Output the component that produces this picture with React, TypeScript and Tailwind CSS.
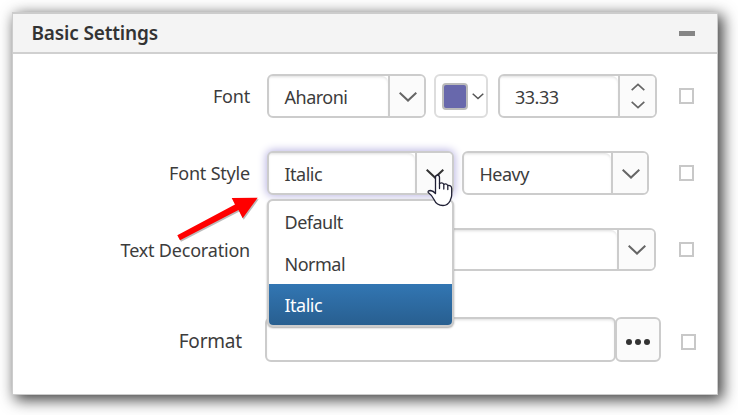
import React from 'react';

function Chevron({ w = 18, h = 10, up = false, color = '#666', sw = 2 }: { w?: number; h?: number; up?: boolean; color?: string; sw?: number }) {
  return (
    <svg width={w} height={h} viewBox={`0 0 ${w} ${h}`} fill="none" stroke={color} strokeWidth={sw} className="shrink-0">
      <path d={up ? `M.7 ${h - 0.8}L${w / 2} 1.4L${w - 0.7} ${h - 0.8}` : `M.7 .8L${w / 2} ${h - 1.4}L${w - 0.7} .8`} />
    </svg>
  );
}

function Label({ children, className }: { children: React.ReactNode; className: string }) {
  return <div className={`shrink-0 whitespace-nowrap text-right tracking-[-0.2px] ${className}`}>{children}</div>;
}

function Check({ className }: { className: string }) {
  return <span className={`shrink-0 border-2 border-[#c8c8c8] bg-white ${className}`} />;
}

function Combo({ text, className, side, glow = false, dark = false }: { text: string; className: string; side: string; glow?: boolean; dark?: boolean }) {
  return (
    <div className={`flex shrink-0 overflow-hidden rounded-md border-2 border-[#ccc] bg-white ${glow ? 'shadow-[0_0_8px_1px_#b9b4e2]' : ''} ${className}`}>
      <div className="flex flex-1 items-center rounded-tr-md pl-[15.5px] pt-0.5 shadow-[inset_0_2px_3px_-1px_#ddd]">{text}</div>
      <div className={`flex items-center justify-center border-l-2 border-[#ccc] bg-[#fbfbfb] pl-px pt-px ${side}`}>
        <Chevron color={dark ? '#333' : '#666'} />
      </div>
    </div>
  );
}

export default function App() {
  return (
    <div className="h-[415px] w-[738px] overflow-hidden bg-white pl-3 pt-3 font-['Noto_Sans','Open_Sans',sans-serif] text-[18px] leading-6 tracking-[-0.5px] text-[#3c3c3c]">
      <section className="relative h-[383px] w-[706px] border border-t-2 border-[#ccc] bg-white shadow-[4px_4px_14px_1px_rgba(0,0,0,0.75)]">
        <header className="flex h-10 items-center justify-between border-b-2 border-[#d0d0d0] bg-[#f4f4f4] pl-[18.5px] pr-[22px] text-[19px] font-semibold tracking-[-0.15px] text-[#333]">
          <h2>Basic Settings</h2>
          <span className="h-[5px] w-4 bg-[#858585]" />
        </header>

        <div className="mt-5 flex h-11 items-center">
          <Label className="w-[237px]">Font</Label>
          <Combo text="Aharoni" className="ml-[17px] h-11 w-[159px]" side="w-9" />
          <div className="ml-2 flex h-11 w-[54px] shrink-0 items-center rounded-md border-2 border-[#ddd] pl-1.5">
            <span className="h-[27px] w-[26px] rounded border-2 border-[#bbb] bg-[#6868ac]" />
            <span className="ml-1 pt-px"><Chevron w={12} h={7} sw={1.5} color="#555" /></span>
          </div>
          <div className="ml-2.5 flex h-11 w-[159px] shrink-0 overflow-hidden rounded-md border-2 border-[#ccc]">
            <div className="flex flex-1 items-center rounded-tr-md pl-[15px] pt-0.5 shadow-[inset_0_2px_3px_-1px_#ddd]">33.33</div>
            <div className="flex w-[37px] flex-col items-center justify-center gap-2.5 border-l-2 border-[#ccc] bg-[#fbfbfb]">
              <Chevron w={14} h={8} up sw={1.7} />
              <Chevron w={14} h={8} sw={1.7} />
            </div>
          </div>
          <Check className="ml-[22px] h-4 w-[15px]" />
        </div>

        <div className="relative mt-[33px] flex h-11 items-center">
          <Label className="w-[237px]">Font Style</Label>
          <Combo text="Italic" className="ml-[17px] h-11 w-[187px]" side="w-[37px]" glow dark />
          <Combo text="Heavy" className="ml-2 h-11 w-[187px]" side="w-[36px]" />
          <Check className="ml-[30px] h-4 w-[15px]" />
          <ul className="absolute left-[254px] top-12 z-10 h-32 w-[187px] overflow-hidden rounded-md border-2 border-[#ccc] bg-white shadow-[0_1px_2px_#aaa]">
            <li className="flex h-[42px] items-center pl-[15.5px]">Default</li>
            <li className="flex h-[41px] items-center pl-[15.5px]">Normal</li>
            <li className="flex h-[41px] items-center bg-linear-to-b from-[#3276b3] to-[#285f90] pl-[15.5px] text-white">Italic</li>
          </ul>
        </div>

        <div className="mt-[33px] flex h-[43px] items-center">
          <Label className="w-[237px] pt-px">Text Decoration</Label>
          <Combo text="" className="ml-[17px] h-[43px] w-[389px]" side="w-[37px]" />
          <Check className="ml-[23px] h-[15px] w-[15px]" />
        </div>

        <div className="mt-[46px] flex h-[45px] items-center">
          <Label className="w-[229px] pt-0.5 text-[19px]">Format</Label>
          <div className="ml-[23px] h-[45px] w-[351px] shrink-0 rounded-md border-2 border-[#ccc] shadow-[inset_0_2px_3px_-1px_#ddd]" />
          <div className="-ml-px flex h-[45px] w-[46px] shrink-0 items-center justify-center gap-[3px] rounded-md border-2 border-[#ccc] bg-[#fbfbfb] pt-1">
            <i className="size-1.5 rounded-full bg-[#333]" />
            <i className="size-1.5 rounded-full bg-[#333]" />
            <i className="size-1.5 rounded-full bg-[#333]" />
          </div>
          <Check className="ml-5 mt-1 h-4 w-[15px]" />
        </div>

        <svg className="absolute left-[162px] top-[180px] z-20" width="90" height="65" viewBox="0 0 90 65">
          <path d="M2.300 41.300L60 10.500L56.700 4L82.700 3.700L67.700 24.300L63.500 16L5 46.300Z" fill="#777" opacity=".5" transform="translate(1 1.500)" />
          <path d="M2.300 41.300L60 10.500L56.700 4L82.700 3.700L67.700 24.300L63.500 16L5 46.300Z" fill="#f00" />
        </svg>
        <svg className="absolute left-[414px] top-[160px] z-30" width="28" height="34" viewBox="0 0 28 34" fill="#fff" stroke="#202035" strokeWidth="1.3" strokeLinejoin="round" strokeLinecap="round">
          <path d="M8.500 19.500V3.500Q8.500 1.200 10.500 1.200T12.500 3.500V9.500Q15.500 8 16.800 10.300Q19.500 9 20.800 11.500Q24.500 11 24.700 14.500V21C24.700 23.500 23.500 25 23 27C21.500 30 19 31.500 16 31.500C11 31.500 8.500 29 7 25.500C5.500 22 4 20.500 1.200 18.500Q.5 16.500 3.500 16.500Q6.500 17 8.500 19.500Z" />
          <path d="M12.500 9.500V14.500M16.800 10.500V15M20.800 11.800V15.500" fill="none" />
        </svg>
      </section>
    </div>
  );
}
